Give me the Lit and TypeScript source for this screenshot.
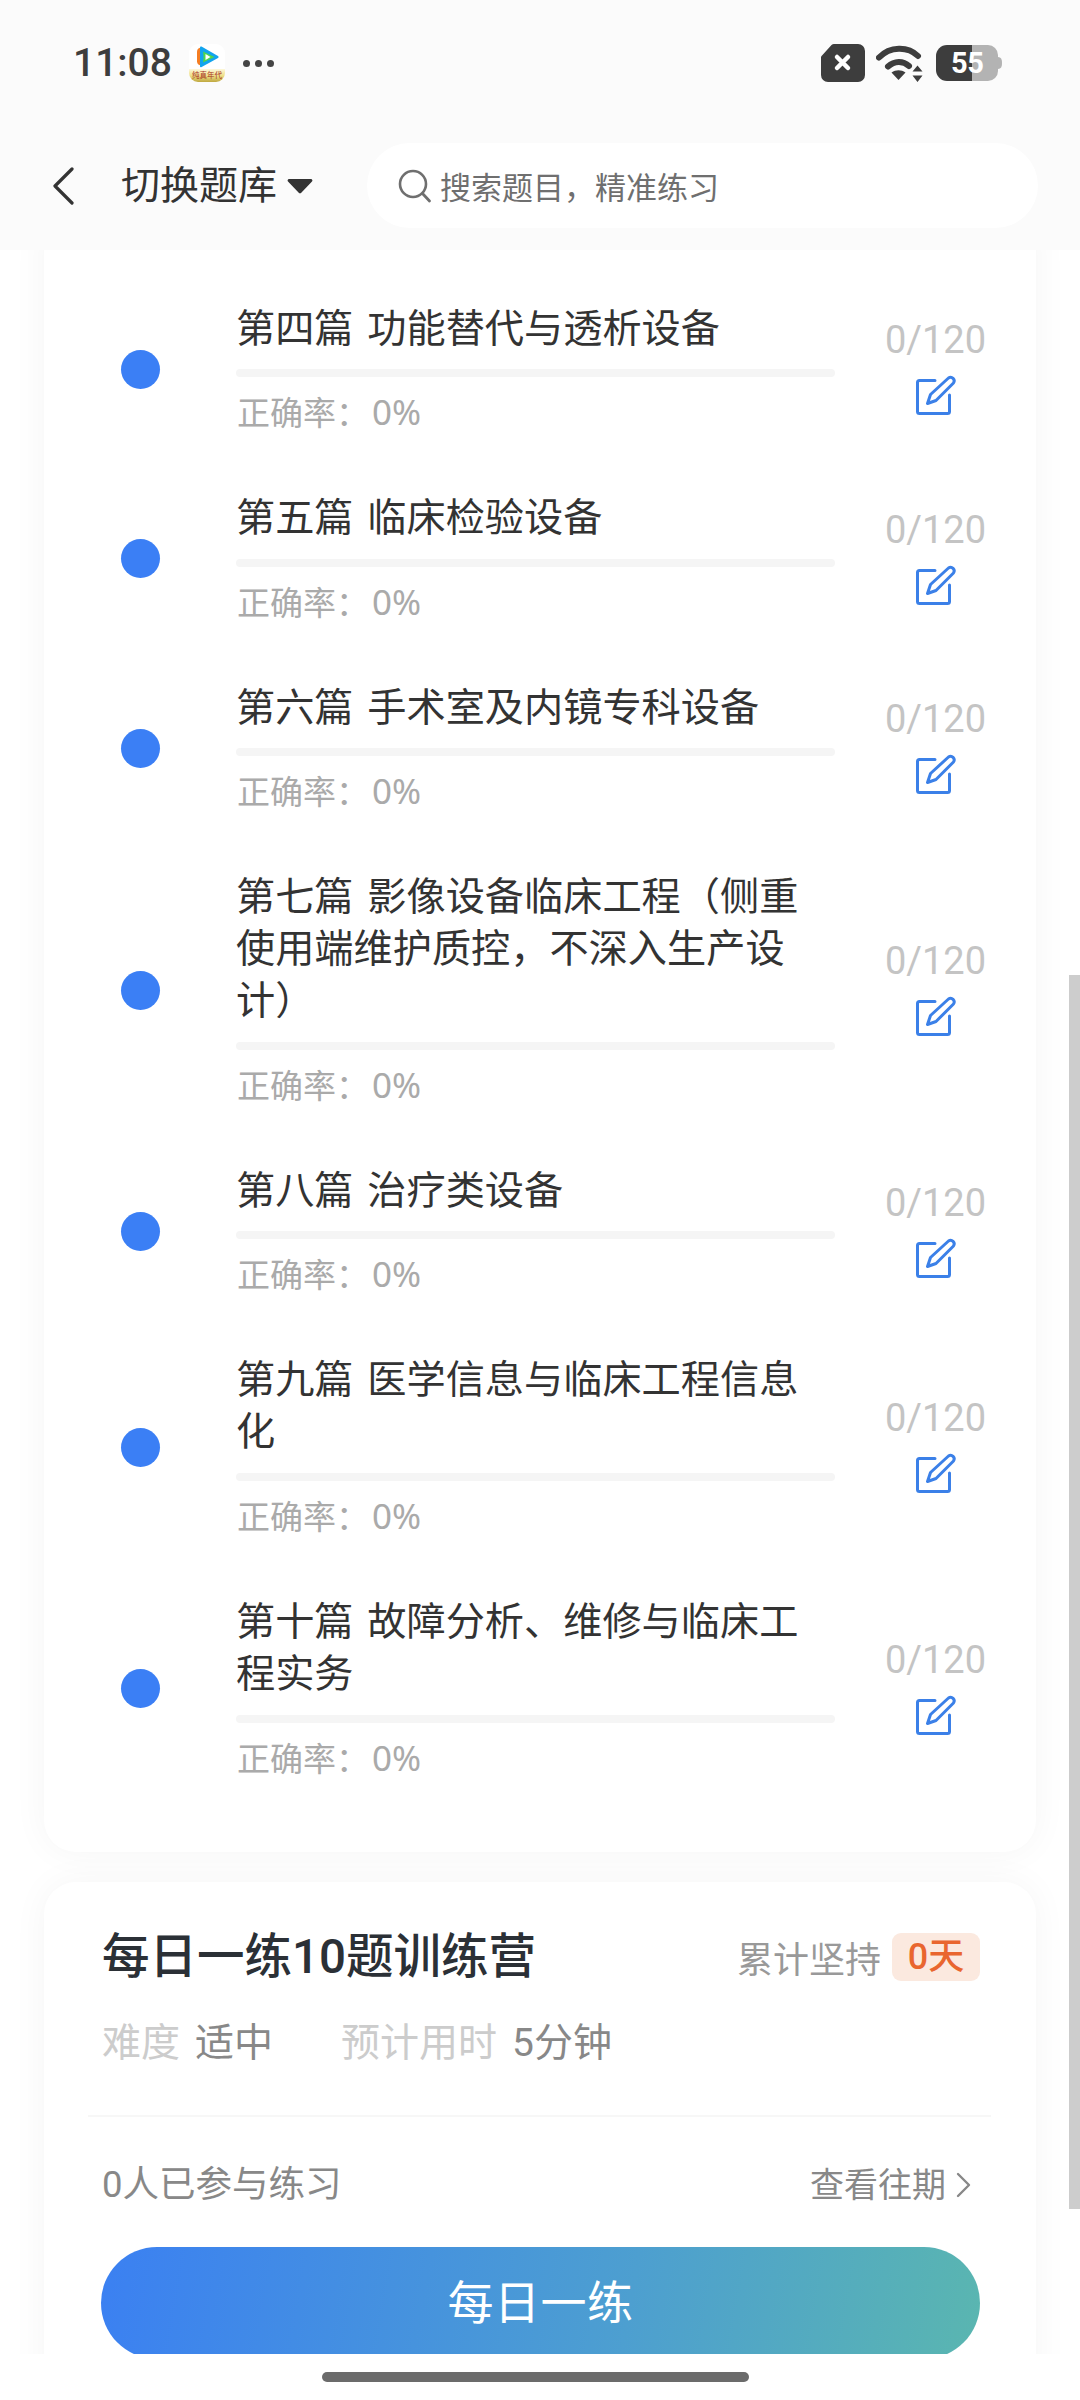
import { LitElement, html, css, svg } from "lit";
import { customElement } from "lit/decorators.js";

const rows = [
  "第四篇 功能替代与透析设备",
  "第五篇 临床检验设备",
  "第六篇 手术室及内镜专科设备",
  "第七篇 影像设备临床工程（侧重使用端维护质控，不深入生产设计）",
  "第八篇 治疗类设备",
  "第九篇 医学信息与临床工程信息化",
  "第十篇 故障分析、维修与临床工程实务",
];

const editIcon = svg`
  <path d="M21 7.5H5.5a2 2 0 0 0-2 2v29a2 2 0 0 0 2 2h28a2 2 0 0 0 2-2V22" fill="none" stroke="#3b80e8" stroke-width="3" stroke-linecap="round"/>
  <path d="M13.5 30.5l3-9L34.5 5a3.6 3.6 0 0 1 5 5L22 27.5z" fill="none" stroke="#3b80e8" stroke-width="3" stroke-linejoin="round"/>`;

@customElement("app-root")
export class AppRoot extends LitElement {
  static styles = css`
    :host {
      display: block;
      width: 1080px;
      height: 2400px;
      background: #fff;
      font-family: Roboto, "Noto Sans CJK SC", sans-serif;
      overflow: hidden;
      position: relative;
    }
    .page {
      display: flex;
      flex-direction: column;
      height: 2400px;
    }
    .header {
      height: 250px;
      background: #fbfbfb;
      position: relative;
      z-index: 2;
      flex: none;
    }
    .status {
      height: 126px;
      padding: 0 0 0 73px;
      display: flex;
      align-items: center;
      color: #3d3d3d;
    }
    .time {
      font-size: 39px;
      font-weight: 500;
      width: 115px;
    }
    .app-icon {
      display: block;
      width: 38px;
      height: 38px;
    }
    .dots {
      display: flex;
      gap: 5px;
      margin-left: 17px;
    }
    .dots i {
      width: 7px;
      height: 7px;
      border-radius: 50%;
      background: #444;
    }
    .status-right {
      margin-left: auto;
      margin-right: 78px;
      display: flex;
      align-items: center;
    }
    .sim {
      display: block;
      width: 44px;
      height: 38px;
    }
    .wifi {
      display: block;
      width: 50px;
      height: 38px;
      margin-left: 11px;
    }
    .battery {
      width: 66px;
      height: 36px;
      margin-left: 10px;
      position: relative;
    }
    .battery svg {
      display: block;
    }
    .battery span {
      position: absolute;
      left: 15px;
      top: 0;
      line-height: 36px;
      font-size: 29px;
      font-weight: 700;
      color: #fff;
      letter-spacing: -0.5px;
    }
    .nav {
      display: flex;
      align-items: center;
      height: 85px;
      margin-top: 17px;
      padding-left: 52px;
    }
    .back {
      display: block;
      width: 22px;
      height: 38px;
    }
    .nav-title {
      margin-left: 47px;
      font-size: 39px;
      color: #333;
      line-height: 52px;
    }
    .caret {
      display: block;
      width: 26px;
      height: 16px;
      margin-left: 10px;
    }
    .search {
      margin-left: 54px;
      width: 671px;
      height: 85px;
      border-radius: 43px;
      background: #fff;
      display: flex;
      align-items: center;
      padding-left: 31px;
      box-sizing: border-box;
      color: #6f6f6f;
      font-size: 31px;
    }
    .search svg {
      display: block;
      width: 34px;
      height: 34px;
      margin-right: 8px;
    }
    .body {
      flex: 1;
      overflow: hidden;
      position: relative;
      margin-top: -40px;
      padding: 0 44px;
      min-height: 0;
    }
    .card {
      background: #fff;
      border-radius: 32px;
      box-shadow: 0 0 36px rgba(0, 0, 0, 0.045);
    }
    .list {
      padding: 64px 0 42.6px;
    }
    .row {
      display: flex;
      align-items: center;
      padding: 28.5px 0 27.6px;
    }
    .dot {
      width: 39px;
      height: 39px;
      border-radius: 50%;
      background: #3b7ff5;
      margin-left: 77px;
      flex: none;
    }
    .mid {
      width: 599px;
      margin-left: 76px;
      flex: none;
    }
    .name {
      padding: 0 25px 0 0;
      font-size: 39.2px;
      line-height: 52px;
      color: #333;
      word-spacing: 4px;
    }
    .bar {
      height: 8px;
      border-radius: 4px;
      background: #f5f5f5;
      margin-top: 14.5px;
    }
    .rate {
      padding-left: 1px;
      margin-top: 14px;
      height: 44px;
      font-family: "Noto Sans", "Noto Sans CJK SC", sans-serif;
      font-size: 33px;
      line-height: 44px;
      color: #aaa;
      margin-bottom: 1px;
    }
    .rate span {
      font-size: 35px;
      line-height: 1;
      margin-left: 3px;
    }
    .side {
      flex: 1;
      display: flex;
      flex-direction: column;
      align-items: center;
    }
    .count {
      font-size: 38px;
      line-height: 50px;
      color: #c4c4c4;
      margin-top: -6px;
    }
    .edit {
      display: block;
      width: 44px;
      height: 44px;
      margin-top: 8px;
    }
    .daily {
      margin-top: 30px;
      height: 560px;
    }
    .daily-top {
      display: flex;
      align-items: center;
      height: 48px;
      padding: 51px 56px 0 58px;
    }
    .daily-title {
      font-size: 47.5px;
      font-weight: 500;
      color: #2b3036;
      line-height: 48px;
    }
    .streak {
      margin-left: auto;
      font-size: 36px;
      color: #999;
    }
    .badge {
      margin-left: 11px;
      width: 88px;
      height: 48px;
      line-height: 48px;
      text-align: center;
      border-radius: 9px;
      background: #fbe9df;
      color: #e9662f;
      font-size: 36px;
      font-weight: 500;
    }
    .meta {
      display: flex;
      margin-top: 37px;
      padding-left: 58px;
      font-size: 39px;
      line-height: 50px;
      color: #888;
    }
    .meta span {
      margin-right: 15px;
    }
    .meta .light {
      color: #ccc;
    }
    .meta .gap {
      margin-right: 68px;
    }
    .divider {
      height: 2px;
      background: #f7f7f7;
      margin: 47px 45px 0 44px;
    }
    .join {
      display: flex;
      align-items: center;
      margin-top: 43px;
      padding: 0 64px 0 58px;
      line-height: 50px;
      color: #888;
    }
    .join-count {
      font-size: 36.5px;
    }
    .history {
      margin-left: auto;
      font-size: 34px;
    }
    .history-arrow {
      display: block;
      width: 16px;
      height: 26px;
      margin-left: 10px;
    }
    .go {
      display: block;
      margin: 37px 0 0 57px;
      width: 879px;
      height: 112px;
      line-height: 112px;
      text-align: center;
      border-radius: 56px;
      background: linear-gradient(100deg, #3b80f2 0%, #4d9fd0 60%, #5ab6b0 100%);
      color: #fff;
      font-size: 46px;
      letter-spacing: 0.5px;
    }
    .footer {
      height: 46px;
      background: #fff;
      flex: none;
      position: relative;
      z-index: 2;
      display: flex;
      justify-content: center;
      padding: 18px 9px 0 0;
      box-sizing: border-box;
    }
    .home {
      width: 427px;
      height: 10px;
      border-radius: 5px;
      background: #6b6b6b;
    }
    .scrollbar {
      position: absolute;
      right: 0;
      top: 975px;
      width: 11px;
      height: 1234px;
      background: #cdcdcd;
      z-index: 1;
    }
  `;

  render() {
    return html`
      <div class="page">
        <div class="header">
          <div class="status">
            <div class="time">11:08</div>
            <svg class="app-icon" viewBox="0 0 38 38">
              <defs>
                <linearGradient id="gold" x1="0" y1="0" x2="0" y2="1">
                  <stop offset="0" stop-color="#fdf8dc" />
                  <stop offset="0.5" stop-color="#efe08a" />
                  <stop offset="1" stop-color="#bfa83f" />
                </linearGradient>
              </defs>
              <rect x="1" width="36" height="38" rx="9" fill="#fff" />
              <path d="M1 25h36v4a9 9 0 0 1-9 9H10a9 9 0 0 1-9-9z" fill="url(#gold)" />
              <path d="M14 3.500c-3 0-5 1.500-5 4v10c0 2.500 2 4 5 4z" fill="#f57d22" />
              <path d="M13 2.500c-.6 0-1 .5-1 1v19c0 .6.500 1 1.200.7L30 14c.8-.5.8-1.500 0-2L13.500 2.600z" fill="#12a4ee" />
              <path d="M15 7.500L26.500 13 15 18.500c.7-3.500.7-7.500 0-11z" fill="#4fd64a" />
              <path d="M17.500 10L22.500 13l-5 3z" fill="#fff" />
              <text x="19" y="33.500" text-anchor="middle" font-size="7.500" fill="#a8321e" font-family="Noto Sans CJK SC, sans-serif">纯真年代</text>
            </svg>
            <div class="dots"><i></i><i></i><i></i></div>
            <div class="status-right">
              <svg class="sim" viewBox="0 0 44 38">
                <path d="M13 0H37a7 7 0 0 1 7 7V31a7 7 0 0 1-7 7H7a7 7 0 0 1-7-7V14a3 3 0 0 1 1-2.500L10.500 1A4 4 0 0 1 13 0z" fill="#3d3d3d" />
                <path d="M16 13l11 11M27 13L16 24" stroke="#fff" stroke-width="4.500" stroke-linecap="round" />
              </svg>
              <svg class="wifi" viewBox="0 0 50 38">
                <path d="M3 13.500C14 2 32 2 42 12" fill="none" stroke="#3d3d3d" stroke-width="6" stroke-linecap="round" />
                <path d="M12 22.500c6.500-6 15-6 21-.5" fill="none" stroke="#3d3d3d" stroke-width="6" stroke-linecap="round" />
                <path d="M15.500 28.500c4.500-3 9.500-3 14 0L22.500 36z" fill="#3d3d3d" />
                <path d="M41.500 21.500l5 6h-10zM41.500 38l5-6.500h-10z" fill="#3d3d3d" />
              </svg>
              <div class="battery">
                <svg width="66" height="36" viewBox="0 0 66 36">
                  <path d="M36 0H52a10 10 0 0 1 10 10V26a10 10 0 0 1-10 10H36z" fill="#b3b3b3" />
                  <path d="M62 12c3 .3 4 2 4 6s-1 5.700-4 6z" fill="#b3b3b3" />
                  <path d="M36 0H11A11 11 0 0 0 0 11V25a11 11 0 0 0 11 11H36z" fill="#3d3d3d" />
                </svg>
                <span>55</span>
              </div>
            </div>
          </div>
          <div class="nav">
            <svg class="back" viewBox="0 0 22 38">
              <path d="M20 2L3 19l17 17" fill="none" stroke="#333" stroke-width="3.200" stroke-linecap="round" stroke-linejoin="round" />
            </svg>
            <div class="nav-title">切换题库</div>
            <svg class="caret" viewBox="0 0 26 16">
              <path d="M2 1h22a1.500 1.500 0 0 1 1 2.500L14.500 14.500a2 2 0 0 1-3 0L1 3.500A1.500 1.500 0 0 1 2 1z" fill="#333" />
            </svg>
            <div class="search">
              <svg viewBox="0 0 34 34">
                <circle cx="15" cy="15" r="13" fill="none" stroke="#6f6f6f" stroke-width="2.600" />
                <path d="M24.500 24.500l7 7.500" stroke="#6f6f6f" stroke-width="2.800" stroke-linecap="round" />
              </svg>
              搜索题目，精准练习
            </div>
          </div>
        </div>

        <div class="body">
          <div class="card list">
            ${rows.map(
              (name) => html`
                <div class="row">
                  <div class="dot"></div>
                  <div class="mid">
                    <div class="name">${name}</div>
                    <div class="bar"></div>
                    <div class="rate">正确率：<span>0%</span></div>
                  </div>
                  <div class="side">
                    <div class="count">0/120</div>
                    <svg class="edit" viewBox="0 0 44 44">${editIcon}</svg>
                  </div>
                </div>
              `
            )}
          </div>

          <div class="card daily">
            <div class="daily-top">
              <div class="daily-title">每日一练10题训练营</div>
              <div class="streak">累计坚持</div>
              <div class="badge">0天</div>
            </div>
            <div class="meta">
              <span class="light">难度</span>
              <span class="gap">适中</span>
              <span class="light">预计用时</span>
              <span>5分钟</span>
            </div>
            <div class="divider"></div>
            <div class="join">
              <div class="join-count">0人已参与练习</div>
              <div class="history">查看往期</div>
              <svg class="history-arrow" viewBox="0 0 16 26">
                <path d="M2 2l11 11L2 24" fill="none" stroke="#888" stroke-width="2.400" stroke-linecap="round" stroke-linejoin="round" />
              </svg>
            </div>
            <div class="go">每日一练</div>
          </div>
        </div>

        <div class="footer"><div class="home"></div></div>
      </div>
      <div class="scrollbar"></div>
    `;
  }
}
